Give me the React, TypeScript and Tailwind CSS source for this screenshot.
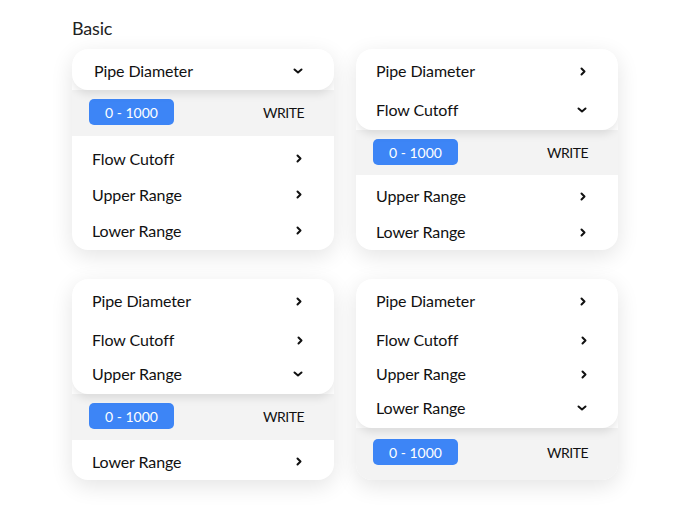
import React from 'react';

const ChevronRight = () => (
  <svg width="6" height="9" viewBox="0 0 6 9" fill="none" className="shrink-0">
    <path d="M1.5 1.5L4.5 4.5L1.5 7.5" stroke="#111" strokeWidth="2" strokeLinecap="round" strokeLinejoin="round" />
  </svg>
);

const ChevronDown = () => (
  <svg width="10" height="6" viewBox="0 0 10 6" fill="none" className="shrink-0">
    <path d="M1.5 1.5L5 4.5L8.5 1.5" stroke="#111" strokeWidth="2" strokeLinecap="round" strokeLinejoin="round" />
  </svg>
);

function Label({ children }: { children: React.ReactNode }) {
  return <span className="text-[16px] text-[#111] tracking-[-0.1px]">{children}</span>;
}

function RangeBand({ last }: { last?: boolean }) {
  return (
    <div className={last ? 'flex-1 pt-[11px] bg-[#f3f3f3]' : 'h-[46px] pt-[9px] bg-[#f3f3f3]'}>
      <div className="flex items-center justify-between pl-[17px] pr-[30px]">
        <div className="w-[85px] h-[26px] rounded-[5px] bg-[#3d85f6] flex items-center justify-center text-white text-[14px]">
          0 - 1000
        </div>
        <span className="text-[14px] text-[#111] tracking-[-0.5px]">WRITE</span>
      </div>
    </div>
  );
}

function Card({ items, openIndex }: { items: string[]; openIndex: number }) {
  const top = items.slice(0, openIndex + 1);
  const rest = items.slice(openIndex + 1);
  const single = top.length === 1;
  return (
    <div className="w-[262px] h-[201px] rounded-[16px] bg-white shadow-[0_6px_22px_rgba(0,0,0,0.11)] flex flex-col overflow-hidden">
      <div
        className={
          single
            ? 'relative z-10 rounded-[16px] bg-white shadow-[0_4px_9px_rgba(0,0,0,0.1)]'
            : 'relative z-10 rounded-[16px] bg-white shadow-[0_4px_9px_rgba(0,0,0,0.1)] pb-[3px]'
        }
      >
        {top.map((label, i) => (
          <div
            key={label}
            className={
              single
                ? 'flex items-center justify-between h-[41px] pt-[3px] pl-[22px] pr-[31px]'
                : i === 0
                  ? 'flex items-center justify-between h-[44px] pl-[20px] pr-[32px]'
                  : 'flex items-center justify-between h-[34px] pl-[20px] pr-[31px]'
            }
          >
            <Label>{label}</Label>
            {i === openIndex ? <ChevronDown /> : <ChevronRight />}
          </div>
        ))}
      </div>
      <RangeBand last={rest.length === 0} />
      {rest.length > 0 && (
        <div className="flex-1 flex flex-col justify-center pt-[3px]">
          {rest.map((label) => (
            <div key={label} className="flex items-center justify-between h-[36px] pl-[20px] pr-[32px]">
              <Label>{label}</Label>
              <ChevronRight />
            </div>
          ))}
        </div>
      )}
    </div>
  );
}

const ITEMS = ['Pipe Diameter', 'Flow Cutoff', 'Upper Range', 'Lower Range'];

export default function App() {
  return (
    <div className="w-[691px] h-[510px] bg-white pl-[72px] pt-[16px] font-['Lato','Open_Sans',sans-serif]">
      <h2 className="text-[18px] text-[#222] leading-[24px] mb-[9px] tracking-[-0.2px]">Basic</h2>
      <div className="grid grid-cols-[262px_262px] gap-x-[22px] gap-y-[29px]">
        <Card items={ITEMS} openIndex={0} />
        <Card items={ITEMS} openIndex={1} />
        <Card items={ITEMS} openIndex={2} />
        <Card items={ITEMS} openIndex={3} />
      </div>
    </div>
  );
}
